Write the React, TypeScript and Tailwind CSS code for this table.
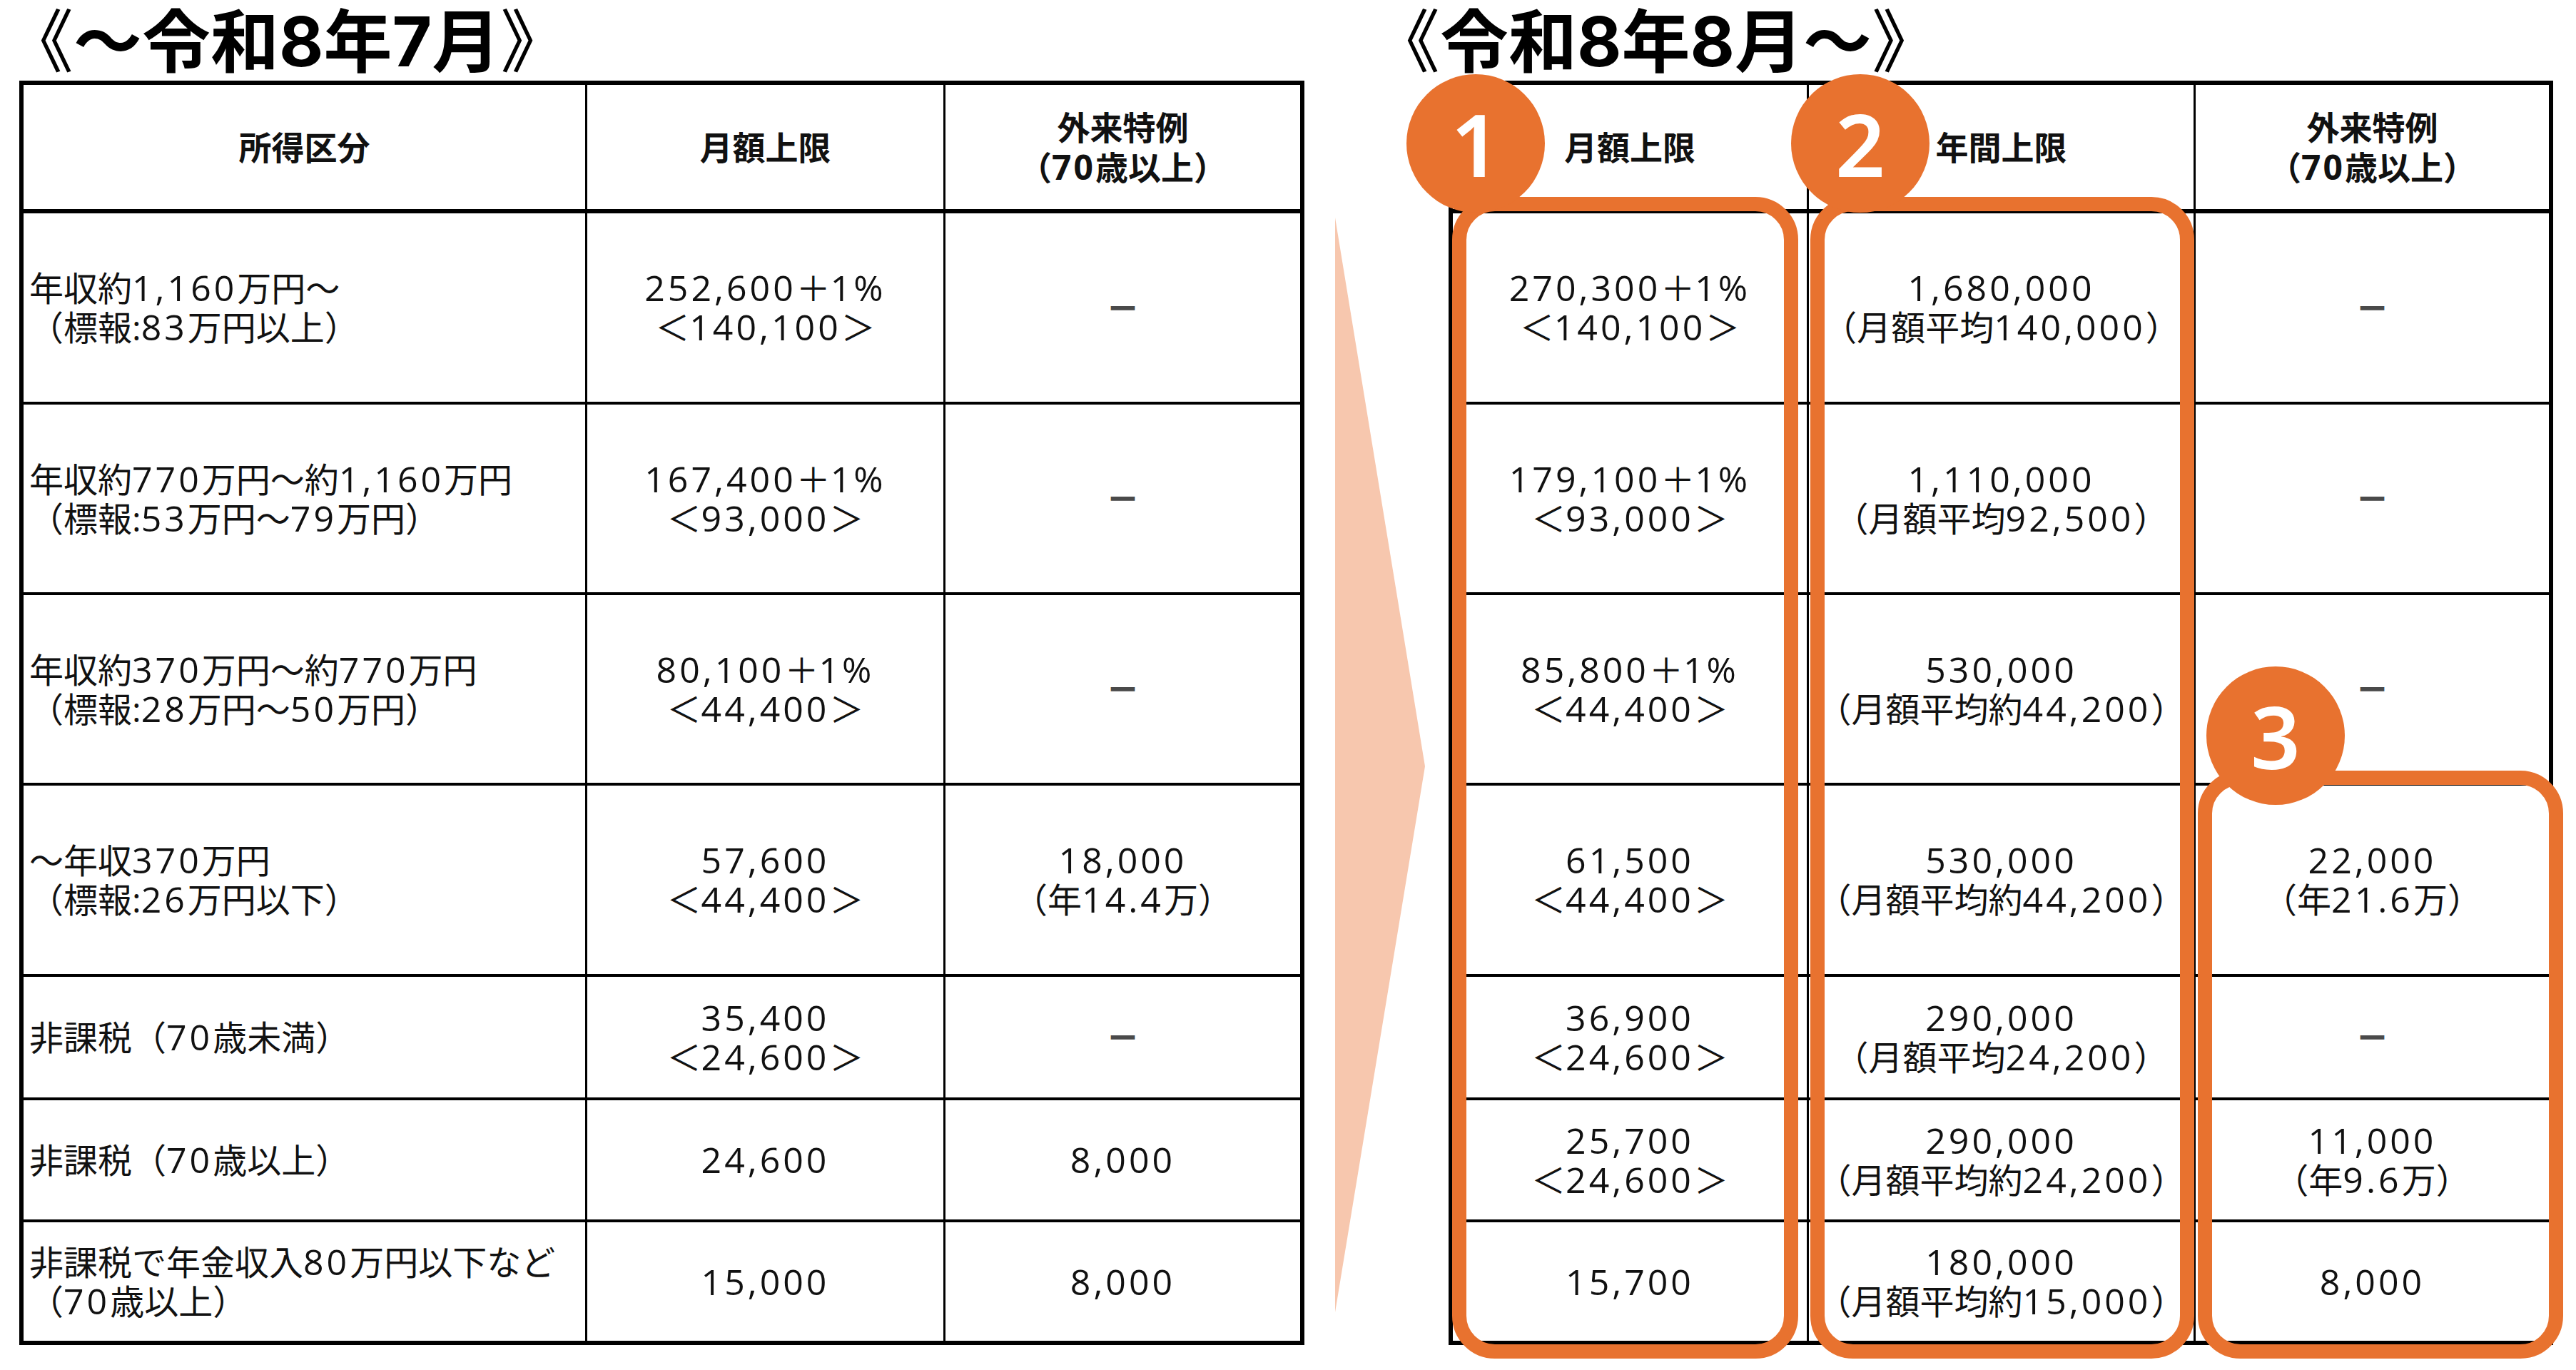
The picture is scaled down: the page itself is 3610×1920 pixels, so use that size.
import React from 'react';

type Cell = string[] | null;

const LEFT_HEAD: string[][] = [['所得区分'], ['月額上限'], ['外来特例', '（70歳以上）']];
const LEFT_ROWS: Cell[][] = [
    [['年収約1,160万円～', '（標報:83万円以上）'], ['252,600＋1%', '＜140,100＞'], null],
    [['年収約770万円～約1,160万円', '（標報:53万円～79万円）'], ['167,400＋1%', '＜93,000＞'], null],
    [['年収約370万円～約770万円', '（標報:28万円～50万円）'], ['80,100＋1%', '＜44,400＞'], null],
    [['～年収370万円', '（標報:26万円以下）'], ['57,600', '＜44,400＞'], ['18,000', '（年14.4万）']],
    [['非課税（70歳未満）'], ['35,400', '＜24,600＞'], null],
    [['非課税（70歳以上）'], ['24,600'], ['8,000']],
    [['非課税で年金収入80万円以下など', '（70歳以上）'], ['15,000'], ['8,000']],
];

const RIGHT_HEAD: string[][] = [['月額上限'], ['年間上限'], ['外来特例', '（70歳以上）']];
const RIGHT_ROWS: Cell[][] = [
    [['270,300＋1%', '＜140,100＞'], ['1,680,000', '（月額平均140,000）'], null],
    [['179,100＋1%', '＜93,000＞'], ['1,110,000', '（月額平均92,500）'], null],
    [['85,800＋1%', '＜44,400＞'], ['530,000', '（月額平均約44,200）'], null],
    [['61,500', '＜44,400＞'], ['530,000', '（月額平均約44,200）'], ['22,000', '（年21.6万）']],
    [['36,900', '＜24,600＞'], ['290,000', '（月額平均24,200）'], null],
    [['25,700', '＜24,600＞'], ['290,000', '（月額平均約24,200）'], ['11,000', '（年9.6万）']],
    [['15,700'], ['180,000', '（月額平均約15,000）'], ['8,000']],
];

// numbers in the source are set wider than the kanji, so latin runs get their own size + tracking
function Txt({ s, head }: { s: string; head?: boolean }) {
    const parts = s.split(/([0-9][0-9,.%]*)/);
    return (
        <>
            {parts.map((p, i) =>
                i % 2 ? (
                    <span
                        key={i}
                        className={`inline-block leading-[55px] ${head ? 'text-[48px] tracking-[3px]' : 'text-[50px] tracking-[4px]'}`}
                    >
                        {p}
                    </span>
                ) : (
                    p
                )
            )}
        </>
    );
}

function Table({ gridCols, head, rows, firstLeft }: { gridCols: string; head: string[][]; rows: Cell[][]; firstLeft?: boolean }) {
    return (
        <div className="border-[6px] border-black bg-white">
            <div className={`grid ${gridCols} grid-rows-[180px_268px_267px_267px_268px_173px_171px_166px]`}>
                {head.map((lines, c) => (
                    <div
                        key={`h${c}`}
                        className={`flex flex-col items-center justify-center border-b-[6px] border-black text-[46px] leading-[55px] font-bold text-[#111] ${c < head.length - 1 ? 'border-r-[3px]' : ''}`}
                    >
                        {lines.map((l) => (
                            <span key={l} className="block h-[55px] whitespace-nowrap"><Txt s={l} head /></span>
                        ))}
                    </div>
                ))}
                {rows.map((row, r) =>
                    row.map((cell, c) => (
                        <div
                            key={`${r}-${c}`}
                            className={`flex flex-col justify-center border-black text-[48px] leading-[55px] text-[#111] ${
                                firstLeft && c === 0 ? 'items-start pl-[8px]' : 'items-center text-center'
                            } ${r < rows.length - 1 ? 'border-b-[4px]' : ''} ${c < row.length - 1 ? 'border-r-[3px]' : ''}`}
                        >
                            {cell ? (
                                cell.map((l) => (
                                    <span key={l} className="block h-[55px] whitespace-nowrap"><Txt s={l} /></span>
                                ))
                            ) : (
                                <span className="font-black text-[#4a4a4a]">－</span>
                            )}
                        </div>
                    ))
                )}
            </div>
        </div>
    );
}

function Badge({ n, className }: { n: string; className: string }) {
    return (
        <div className={`absolute w-[194px] h-[194px] rounded-full bg-[#E8722F] flex items-center justify-center text-white text-[122px] leading-none font-semibold font-[family-name:'Noto_Sans',sans-serif] ${className}`}>
            {n}
        </div>
    );
}

function Title({ children, className }: { children: React.ReactNode; className: string }) {
    return (
        <div className={`h-[113px] pt-[10px] text-[96px] leading-none font-bold text-black whitespace-nowrap font-[family-name:Inter,'Noto_Sans_CJK_JP',sans-serif] ${className}`}>
            {children}
        </div>
    );
}

export default function App() {
    return (
        <div className="w-[3610px] h-[1920px] bg-white overflow-hidden font-[family-name:'Open_Sans','Noto_Sans_CJK_JP',sans-serif]">
            <div className="flex items-start pl-[27px]">

                {/* before */}
                <div className="w-[1801px] shrink-0">
                    <Title className="-ml-[20px]">
                        <span className="font-normal">《</span>～令和8年7月<span className="font-normal">》</span>
                    </Title>
                    <Table gridCols="grid-cols-[790px_502px_497px]" head={LEFT_HEAD} rows={LEFT_ROWS} firstLeft />
                </div>

                {/* arrow */}
                <svg className="ml-[43px] mt-[305px] shrink-0" width="126" height="1534" viewBox="0 0 126 1534">
                    <polygon points="0,0 126,769 0,1534" fill="#F7C7AE" />
                </svg>

                {/* after */}
                <div className="relative ml-[33px] w-[1548px] shrink-0">
                    <Title className="-ml-[108px]">
                        <span className="font-normal">《</span>令和8年8月～<span className="font-normal">》</span>
                    </Title>
                    <Table gridCols="grid-cols-[499px_542px_495px]" head={RIGHT_HEAD} rows={RIGHT_ROWS} />

                    {/* highlight frames */}
                    <div className="absolute left-[5px] top-[276px] w-[485px] h-[1628px] rounded-[60px] border-[20px] border-[#E8722F]" />
                    <div className="absolute left-[507px] top-[276px] w-[538px] h-[1628px] rounded-[60px] border-[20px] border-[#E8722F]" />
                    <div className="absolute left-[1050px] top-[1080px] w-[512px] h-[824px] rounded-[60px] border-[20px] border-[#E8722F]" />

                    <Badge n="1" className="left-[-59px] top-[104px]" />
                    <Badge n="2" className="left-[480px] top-[104px]" />
                    <Badge n="3" className="left-[1062px] top-[934px]" />
                </div>
            </div>
        </div>
    );
}
